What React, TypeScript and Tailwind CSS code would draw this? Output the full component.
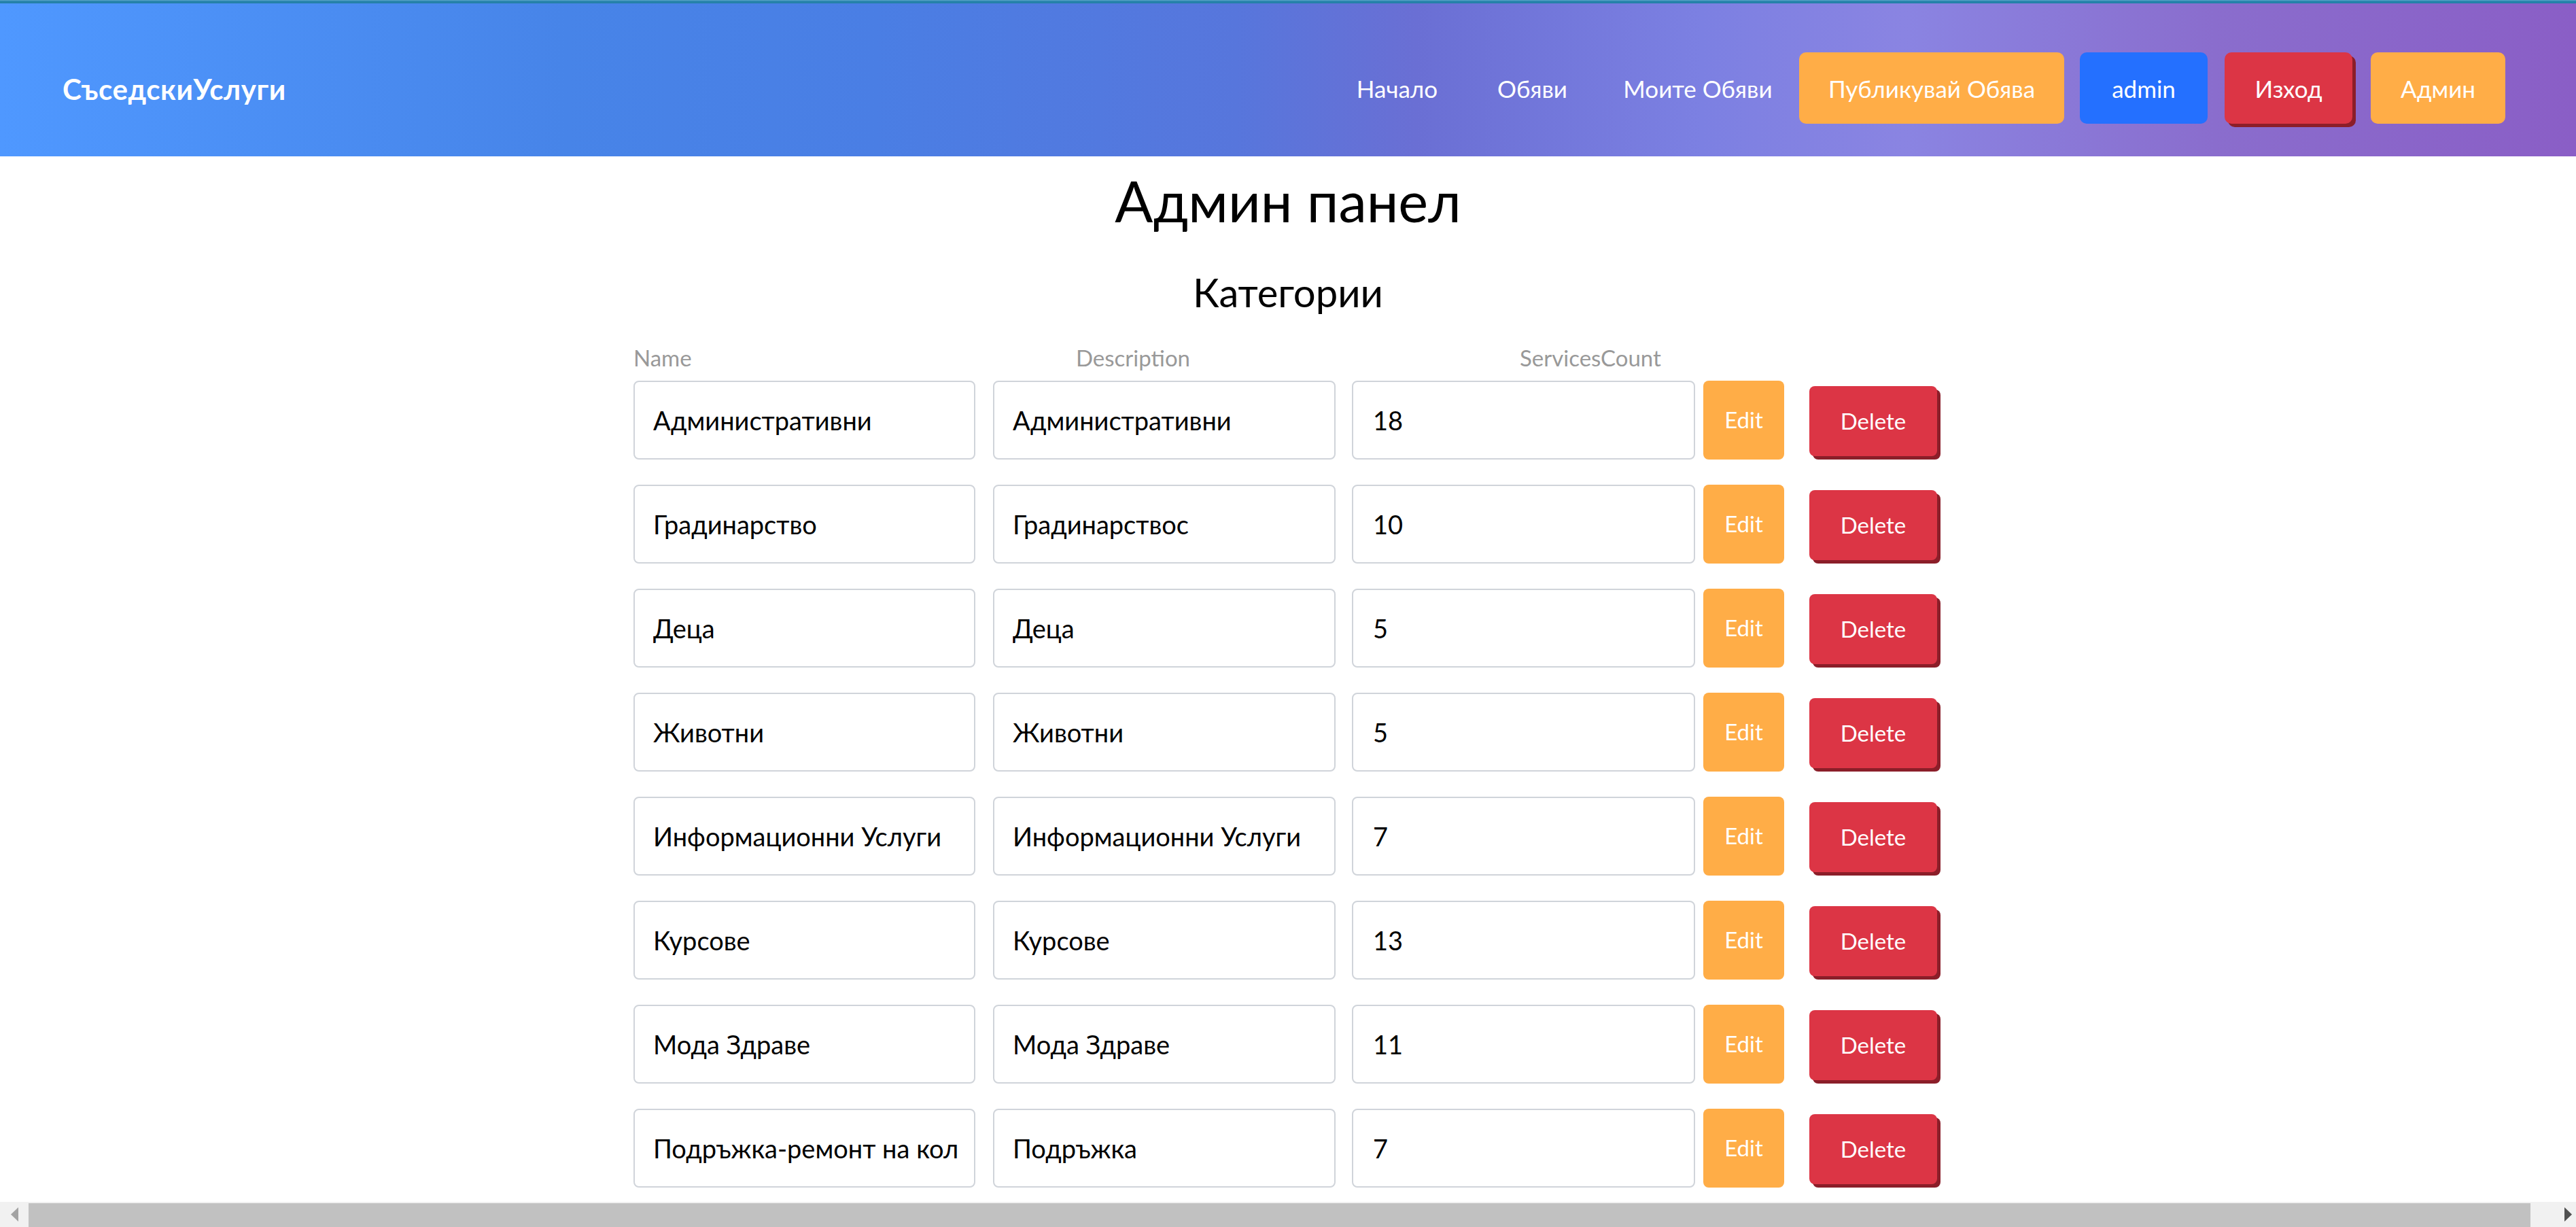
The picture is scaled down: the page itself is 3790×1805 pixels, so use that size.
import React from "react";

interface CategoryRow {
    name: string;
    description: string;
    servicesCount: number;
}

const categories: CategoryRow[] = [
    { name: "Административни", description: "Административни", servicesCount: 18 },
    { name: "Градинарство", description: "Градинарствос", servicesCount: 10 },
    { name: "Деца", description: "Деца", servicesCount: 5 },
    { name: "Животни", description: "Животни", servicesCount: 5 },
    { name: "Информационни Услуги", description: "Информационни Услуги", servicesCount: 7 },
    { name: "Курсове", description: "Курсове", servicesCount: 13 },
    { name: "Мода Здраве", description: "Мода Здраве", servicesCount: 11 },
    { name: "Подръжка-ремонт на кол", description: "Подръжка", servicesCount: 7 },
];

const inputClass =
    "h-full rounded-[8px] border-2 border-[#d0d4da] bg-white pl-[27px] pr-[14px] text-[38px] text-black outline-none";

// Navbar
const Navbar: React.FC = () => {
    return (
        <header className="h-[230px] shrink-0 flex flex-col bg-[linear-gradient(90deg,#4f98ff_0%,#4784e8_22%,#4a7ee4_34%,#5776dc_48%,#6a6fd4_55%,#7c80e2_66%,#8a84e2_74%,#8a6dcd_86%,#8a5ec6_100%)]">
            <div className="h-[5px] bg-[linear-gradient(180deg,#62a9cc_0%,#2581a9_40%,#2581a9_100%)]" />
            <div className="flex-1 flex items-center justify-between pl-[92px] pr-[104px] pt-[24px]">
                <a className="pt-[3px] text-[42px] leading-[1.2] font-bold tracking-[0.6px] text-white">СъседскиУслуги</a>
                <nav className="flex items-center text-[35px] leading-[1.2] text-white">
                    <a className="w-[209px] text-center">Начало</a>
                    <a className="w-[189px] text-center">Обяви</a>
                    <a className="w-[298px] text-center">Моите Обяви</a>
                    <button className="h-[105px] w-[390px] rounded-[10px] bg-[#ffad47] text-white">
                        Публикувай Обява
                    </button>
                    <button className="ml-[23px] h-[105px] w-[188px] rounded-[10px] bg-[#2470ff] text-white">
                        admin
                    </button>
                    <button className="ml-[25px] h-[105px] w-[188px] rounded-[10px] bg-[#dc3545] text-white shadow-[5px_5px_0_0_#8b1e29]">
                        Изход
                    </button>
                    <button className="ml-[27px] h-[105px] w-[198px] rounded-[10px] bg-[#ffad47] text-white">
                        Админ
                    </button>
                </nav>
            </div>
        </header>
    );
};

const CategoryItem: React.FC<{ row: CategoryRow }> = ({ row }) => {
    return (
        <div className="flex h-[116px] items-stretch">
            <input readOnly value={row.name} className={`${inputClass} w-[503px]`} />
            <input readOnly value={row.description} className={`${inputClass} ml-[26px] w-[504px]`} />
            <input readOnly value={String(row.servicesCount)} className={`${inputClass} ml-[24px] w-[505px] pl-[29px]`} />
            <button className="ml-[12px] w-[119px] rounded-[8px] bg-[#ffad47] text-[33px] text-white">Edit</button>
            <button className="ml-[37px] mb-[5px] h-[103px] w-[188px] self-end rounded-[8px] bg-[#dc3545] text-[33px] text-white shadow-[5px_5px_0_0_#8b1e29]">
                Delete
            </button>
        </div>
    );
};

// Fake horizontal scrollbar strip at the bottom of the window
const ScrollStrip: React.FC = () => {
    return (
        <div className="h-[37px] shrink-0 flex bg-[#f1f1f1]">
            <div className="w-[42px] flex items-center justify-center">
                <svg width="11" height="21" viewBox="0 0 11 21">
                    <polygon points="11,0 11,21 0,10.5" fill="#a3a3a3" />
                </svg>
            </div>
            <div className="flex-1 mt-[2px] bg-[#c1c1c1]" />
            <div className="w-[67px] flex items-center pl-[50px]">
                <svg width="11" height="21" viewBox="0 0 11 21">
                    <polygon points="0,0 0,21 11,10.5" fill="#505050" />
                </svg>
            </div>
        </div>
    );
};

export default function App() {
    return (
        <div className="h-[1805px] w-[3790px] flex flex-col overflow-hidden bg-white font-['Lato','Open_Sans',sans-serif]">
            <Navbar />
            <main className="flex-1 overflow-hidden flex flex-col items-center">
                <h1 className="mt-[16px] text-[83px] leading-[1.2] text-black">Админ панел</h1>
                <h2 className="mt-[49px] text-[58px] leading-[1.2] text-black">Категории</h2>
                <div className="mt-[42px] w-[1926px]">
                    <div className="flex h-[40px] text-[33px] leading-[40px] text-[#999999]">
                        <span className="w-[651px]">Name</span>
                        <span className="w-[653px]">Description</span>
                        <span>ServicesCount</span>
                    </div>
                    <div className="mt-[14px] flex flex-col gap-[37px]">
                        {categories.map((c) => (
                            <CategoryItem key={c.name} row={c} />
                        ))}
                    </div>
                </div>
            </main>
            <ScrollStrip />
        </div>
    );
}
